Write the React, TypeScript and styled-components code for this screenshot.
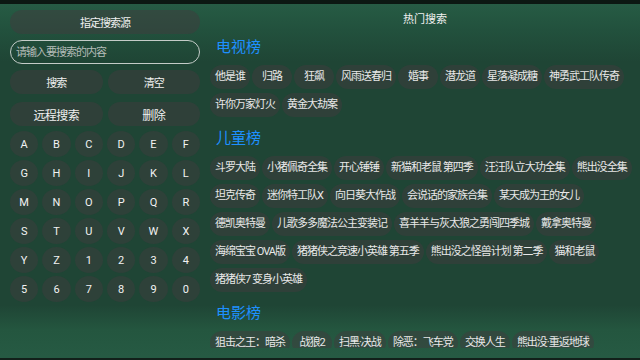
import React from "react";
import styled, { createGlobalStyle } from "styled-components";

const GlobalStyle = createGlobalStyle`
  html, body {
    margin: 0;
    padding: 0;
    background: #1f4535;
  }
  body {
    width: 640px;
    height: 360px;
    overflow: hidden;
    font-family: Roboto, "Noto Sans CJK SC", sans-serif;
  }
`;

const Screen = styled.div`
  width: 640px;
  height: 360px;
  display: flex;
  flex-direction: column;
  background: linear-gradient(
    to bottom,
    #275d45 0px,
    #22513d 30px,
    #1f4535 62px,
    #1f4535 305px,
    #24563f 330px,
    #265a43 356px
  );
`;

const TopStrip = styled.div`
  height: 4px;
  flex-shrink: 0;
  background: #0c1812;
`;

const BottomLine = styled.div`
  height: 2px;
  flex-shrink: 0;
  background: #12201a;
`;

const Main = styled.div`
  flex: 1;
  display: flex;
  min-height: 0;
`;

const SidePanel = styled.div`
  width: 190px;
  margin-left: 10px;
  padding-top: 6px;
  display: flex;
  flex-direction: column;
  gap: 6px;
`;

const PillButton = styled.button<{ $big?: boolean }>`
  height: 24px;
  border: none;
  border-radius: 12px;
  background: rgba(64, 60, 62, 0.5);
  color: #f0f0f0;
  font-family: Roboto, "Noto Sans CJK SC", sans-serif;
  font-size: ${(p) => (p.$big ? "12px" : "11px")};
  letter-spacing: ${(p) => (p.$big ? "-0.6px" : "-1px")};
  padding: 0;
  cursor: pointer;
`;

const SearchInput = styled.input`
  height: 24px;
  box-sizing: border-box;
  border: 1px solid #c4ccc8;
  border-radius: 12px;
  background: transparent;
  padding: 0 5px;
  color: #f0f0f0;
  font-family: Roboto, "Noto Sans CJK SC", sans-serif;
  font-size: 11px;
  letter-spacing: -1px;
  outline: none;
  &::placeholder {
    color: #b4bcb8;
  }
`;

const ButtonRow = styled.div<{ $top?: number }>`
  display: grid;
  grid-template-columns: 1fr 1fr;
  gap: 5px;
  margin-top: ${(p) => p.$top ?? 0}px;
`;

const KeyGrid = styled.div`
  display: grid;
  grid-template-columns: repeat(6, 1fr);
  gap: 3px 4px;
  margin-top: -1px;
`;

const Key = styled.button`
  height: 26px;
  border: none;
  border-radius: 50%;
  background: rgba(64, 60, 62, 0.45);
  color: #f2f2f2;
  font-family: Roboto, sans-serif;
  font-size: 11px;
  padding: 0;
  cursor: pointer;
`;

const HotPanel = styled.div`
  flex: 1;
  margin-left: 10px;
  padding-top: 6px;
  height: 338px;
  overflow: hidden;
`;

const PanelTitle = styled.div`
  height: 16px;
  text-align: center;
  color: #f0f0f0;
  font-family: "Noto Sans CJK SC", sans-serif;
  font-size: 11px;
  line-height: 16px;
`;

const Heading = styled.div`
  height: 39px;
  color: #1e90ff;
  font-family: "Noto Sans CJK SC", sans-serif;
  font-size: 15px;
  line-height: 39px;
  padding-left: 6px;
`;

const ChipList = styled.div`
  display: flex;
  flex-wrap: wrap;
  gap: 4px 2px;
`;

const Chip = styled.span`
  height: 24px;
  min-width: 40px;
  box-sizing: border-box;
  padding: 0 5px;
  border-radius: 12px;
  background: rgba(64, 60, 62, 0.5);
  color: #e8e8e8;
  font-size: 11px;
  letter-spacing: -1px;
  line-height: 24px;
  text-align: center;
  white-space: nowrap;
  overflow: hidden;
`;

const keys = "ABCDEFGHIJKLMNOPQRSTUVWXYZ1234567890".split("");

const sections: { title: string; items: string[] }[] = [
  {
    title: "电视榜",
    items: [
      "他是谁", "归路", "狂飙", "风雨送春归", "婚事", "潜龙道", "星落凝成糖",
      "神勇武工队传奇", "许你万家灯火", "黄金大劫案",
    ],
  },
  {
    title: "儿童榜",
    items: [
      "斗罗大陆", "小猪佩奇全集", "开心锤锤", "新猫和老鼠 第四季", "汪汪队立大功全集",
      "熊出没全集", "坦克传奇", "迷你特工队X", "向日葵大作战", "会说话的家族合集",
      "某天成为王的女儿", "德凯奥特曼", "儿歌多多魔法公主变装记", "喜羊羊与灰太狼之勇闯四季城",
      "戴拿奥特曼", "海绵宝宝 OVA版", "猪猪侠之竞速小英雄 第五季", "熊出没之怪兽计划 第二季",
      "猫和老鼠", "猪猪侠7 变身小英雄",
    ],
  },
  {
    title: "电影榜",
    items: ["狙击之王：暗杀", "战狼2", "扫黑·决战", "除恶：飞车党", "交换人生", "熊出没·重返地球"],
  },
];

export default function App() {
  return (
    <Screen>
      <GlobalStyle />
      <TopStrip />
      <Main>
        <SidePanel>
          <PillButton>指定搜索源</PillButton>
          <SearchInput placeholder="请输入要搜索的内容" />
          <ButtonRow>
            <PillButton>搜索</PillButton>
            <PillButton>清空</PillButton>
          </ButtonRow>
          <ButtonRow $top={2}>
            <PillButton $big>远程搜索</PillButton>
            <PillButton $big>删除</PillButton>
          </ButtonRow>
          <KeyGrid>
            {keys.map((k) => (
              <Key key={k}>{k}</Key>
            ))}
          </KeyGrid>
        </SidePanel>
        <HotPanel>
          <PanelTitle>热门搜索</PanelTitle>
          {sections.map((s) => (
            <React.Fragment key={s.title}>
              <Heading>{s.title}</Heading>
              <ChipList>
                {s.items.map((t) => (
                  <Chip key={t}>{t}</Chip>
                ))}
              </ChipList>
            </React.Fragment>
          ))}
        </HotPanel>
      </Main>
      <BottomLine />
    </Screen>
  );
}
